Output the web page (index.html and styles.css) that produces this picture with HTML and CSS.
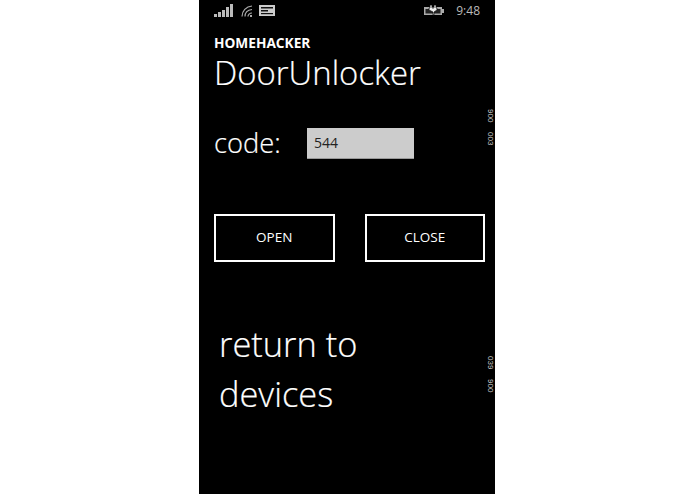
FILE: index.html
```html
<!DOCTYPE html>
<html lang="en">
<head>
<meta charset="utf-8">
<title>DoorUnlocker</title>
<link rel="stylesheet" href="styles.css">
</head>
<body>
<main class="phone">
  <header class="status">
    <div class="status-left">
      <svg class="ic-signal" width="19" height="13" viewBox="0 0 19 13"><g fill="#bbb"><rect x="0" y="10" width="3" height="3"/><rect x="4" y="8" width="3" height="5"/><rect x="8" y="6" width="3" height="7"/><rect x="12" y="3" width="3" height="10"/><rect x="16" y="0" width="3" height="13"/></g></svg>
      <svg class="ic-wifi" width="12" height="12" viewBox="0 0 12 12"><g fill="none" stroke="#aaa" stroke-width="1.2"><path d="M1 11.500C1 6 5 1.500 11 1"/><path d="M4 11.500C4 8 6.500 5 11 4.500"/><path d="M7 11.500C7 10 8.500 8 11 8"/></g><rect x="9" y="10" width="2" height="2" fill="#aaa"/></svg>
      <svg class="ic-msg" width="16" height="11" viewBox="0 0 16 11"><rect width="16" height="11" fill="#ccc"/><rect x="2" y="2" width="12" height="1.500" fill="#111"/><rect x="2" y="5" width="7" height="1.500" fill="#111"/><rect x="2" y="8" width="12" height="1.200" fill="#111"/></svg>
    </div>
    <div class="status-right">
      <svg class="ic-batt" width="20" height="11" viewBox="0 0 20 11"><rect x="0" y="2" width="18" height="8" fill="#aaa"/><rect x="1.500" y="4" width="15" height="4.500" fill="#222"/><rect x="18" y="4" width="2" height="4" fill="#aaa"/><path d="M6 0h2v3h2V0h2v3h1v2l-3 2v3H9V7L5 5V3h1z" fill="#eee" stroke="#111" stroke-width=".7"/></svg>
      <span class="time">9:48</span>
    </div>
  </header>
  <p class="app">HOMEHACKER</p>
  <h1 class="page">DoorUnlocker</h1>
  <div class="code-row">
    <label class="code-label" for="code">code:</label>
    <input class="code-input" id="code" value="544">
  </div>
  <div class="buttons">
    <button class="btn">OPEN</button>
    <button class="btn">CLOSE</button>
  </div>
  <p class="return">return to<br>devices</p>
  <div class="mark mark-top"><span>900</span><span>003</span></div>
  <div class="mark mark-bottom"><span>039</span><span>900</span></div>
</main>
</body>
</html>
```
FILE: styles.css
```css
* { box-sizing: border-box; }
html, body { margin: 0; height: 100%; background: #fff; }
body { display: flex; justify-content: flex-start; font-family: "Open Sans", "Noto Sans", sans-serif; }
.phone {
  position: relative;
  width: 296px;
  height: 494px;
  margin-left: 199px;
  background: #000;
  color: #fff;
  padding: 0 10px 0 15px;
}
.status { display: flex; justify-content: space-between; height: 17px; padding-top: 4px; }
.status-left { display: flex; align-items: center; height: 13px; }
.ic-wifi { margin-left: 8px; }
.ic-msg { margin-left: 6px; }
.status-right { display: flex; align-items: center; height: 13px; margin-right: 5px; }
.time { font-size: 12px; color: #bbb; margin-left: 12px; line-height: 13px; }
.app { margin: 17.500px 0 0; font-size: 13.700px; font-weight: 700; line-height: 16px; }
.page { margin: .5px 0 0; font-size: 32.900px; font-weight: 300; line-height: 44px; -webkit-text-stroke: .2px #fff; }
.code-row { display: flex; align-items: center; margin-top: 30px; }
.code-label { font-size: 27.300px; font-weight: 300; width: 93px; line-height: 36px; -webkit-text-stroke: .2px #fff; }
.code-input {
  width: 107px;
  height: 31px;
  border: 0;
  border-bottom: 1px solid #999;
  background: #ccc;
  color: #222;
  padding: 0 7px;
  font: 400 14px "Open Sans", sans-serif;
}
.buttons { display: flex; gap: 30px; margin-top: 53px; }
.btn {
  width: 121px;
  height: 48px;
  padding: 0 0 2px;
  background: #000;
  border: 2px solid #fff;
  color: #fff;
  font: 500 13.500px "Open Sans", sans-serif;
}
.return { margin: 57px 0 0 5px; font-size: 34.400px; font-weight: 300; line-height: 50px; -webkit-text-stroke: .2px #fff; }
.mark {
  position: absolute;
  right: 1px;
  width: 8px;
  writing-mode: vertical-rl;
  font: 400 8px/8px "Liberation Sans", sans-serif;
  color: #ccc;
  display: flex;
  gap: 10px;
}
.mark-top { top: 109px; }
.mark-bottom { top: 356px; }
```
